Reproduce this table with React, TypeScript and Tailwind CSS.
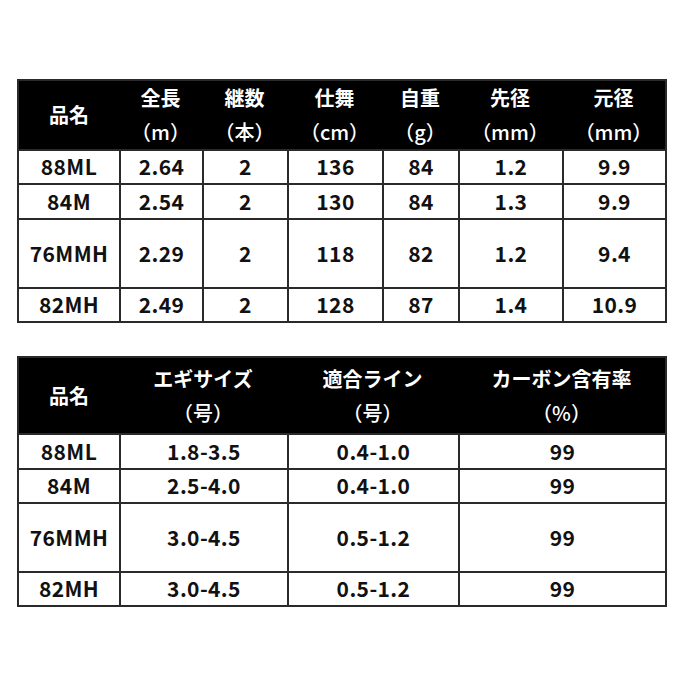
type Spec = {
  grid: string
  headerH: string
  head: [string, string?][]
  rows: { h: string; cells: string[] }[]
}

const spec1: Spec = {
  grid: 'grid-cols-[100px_83px_85px_95px_76px_104px_103px]',
  headerH: 'h-[68px]',
  head: [
    ['品名'],
    ['全長', '（m）'],
    ['継数', '（本）'],
    ['仕舞', '（cm）'],
    ['自重', '（g）'],
    ['先径', '（mm）'],
    ['元径', '（mm）'],
  ],
  rows: [
    { h: 'h-[34px]', cells: ['88ML', '2.64', '2', '136', '84', '1.2', '9.9'] },
    { h: 'h-[35px]', cells: ['84M', '2.54', '2', '130', '84', '1.3', '9.9'] },
    { h: 'h-[69px]', cells: ['76MMH', '2.29', '2', '118', '82', '1.2', '9.4'] },
    { h: 'h-[34px]', cells: ['82MH', '2.49', '2', '128', '87', '1.4', '10.9'] },
  ],
}

const spec2: Spec = {
  grid: 'grid-cols-[100px_168px_171px_207px]',
  headerH: 'h-[75px]',
  head: [
    ['品名'],
    ['エギサイズ', '（号）'],
    ['適合ライン', '（号）'],
    ['カーボン含有率', '（%）'],
  ],
  rows: [
    { h: 'h-[35px]', cells: ['88ML', '1.8-3.5', '0.4-1.0', '99'] },
    { h: 'h-[34px]', cells: ['84M', '2.5-4.0', '0.4-1.0', '99'] },
    { h: 'h-[69px]', cells: ['76MMH', '3.0-4.5', '0.5-1.2', '99'] },
    { h: 'h-[34px]', cells: ['82MH', '3.0-4.5', '0.5-1.2', '99'] },
  ],
}

function SpecTable({ spec }: { spec: Spec }) {
  return (
    <div className="w-[650px] border-2 border-[#2a2a2a]">
      <div className={`grid ${spec.grid} ${spec.headerH} bg-black text-white`}>
        {spec.head.map(([a, b], i) => (
          <div
            key={i}
            className="flex flex-col items-center justify-center gap-[12px] text-[20px] font-bold leading-[22px]"
          >
            <span>{a}</span>
            {b && <span className="font-medium">{b}</span>}
          </div>
        ))}
      </div>
      {spec.rows.map((r, ri) => (
        <div key={ri} className={`grid ${spec.grid} ${r.h} border-t-2 border-[#2a2a2a]`}>
          {r.cells.map((c, ci) => (
            <div
              key={ci}
              className={`flex items-center justify-center text-[21px] font-bold tracking-[0.4px] text-[#111] ${
                ci > 0 ? 'border-l-2 border-[#2a2a2a]' : ''
              }`}
            >
              {c}
            </div>
          ))}
        </div>
      ))}
    </div>
  )
}

export default function App() {
  return (
    <div className="flex h-[680px] w-[680px] flex-col gap-[33px] bg-white pl-[17px] pt-[79px] font-['Noto_Sans_CJK_JP','Noto_Sans',sans-serif]">
      <SpecTable spec={spec1} />
      <SpecTable spec={spec2} />
    </div>
  )
}
